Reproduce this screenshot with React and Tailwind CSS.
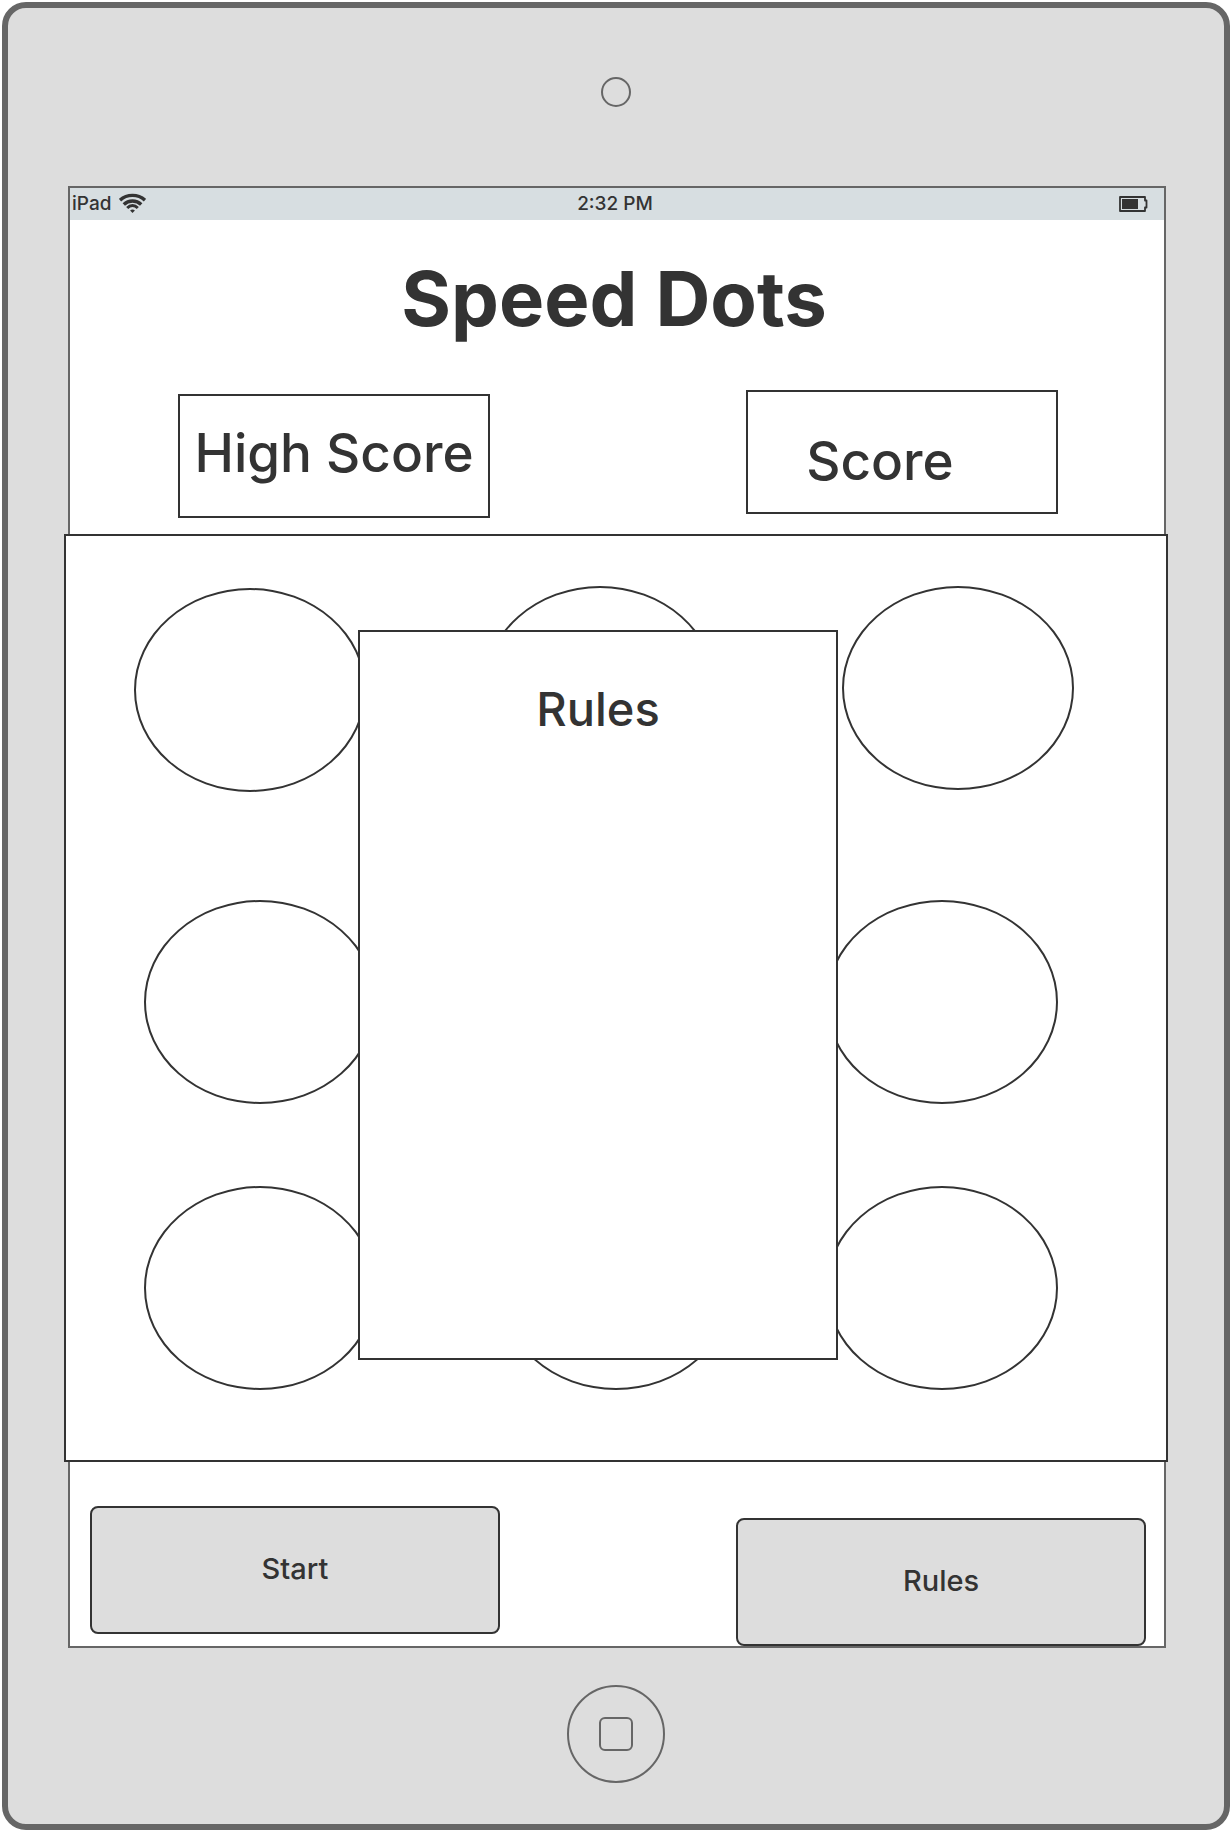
function WifiIcon() {
  return (
    <svg width="27" height="20" viewBox="0 0 27 20" fill="none" stroke="#333333" strokeWidth="3.4" aria-hidden="true">
      <path d="M1 7.2 C8 0.8 19 0.8 26 7.2" />
      <path d="M4.8 11.4 C9.6 6.8 17.4 6.8 22.2 11.4" strokeWidth="3.4" />
      <path d="M8.2 15 C11.4 11.8 15.6 11.8 18.8 15" strokeWidth="3" />
      <path d="M11.1 17.6 Q13.5 15.4 15.9 17.6 L13.5 20 Z" fill="#333333" stroke="none" />
    </svg>
  );
}

function BatteryIcon() {
  return (
    <svg width="29" height="16" viewBox="0 0 29 16" aria-hidden="true">
      <path d="M1 1 H26 V4.5 H27.5 V11.5 H26 V15 H1 Z" fill="none" stroke="#333333" strokeWidth="1.8" strokeLinejoin="round" />
      <rect x="3" y="3" width="16" height="10" fill="#333333" />
    </svg>
  );
}

function Dot({ label, className = "" }) {
  return (
    <button
      type="button"
      aria-label={label}
      className={`h-[204px] w-[232px] shrink-0 rounded-[50%] border-2 border-[#333333] bg-white ${className}`}
    />
  );
}

function StatusBar() {
  return (
    <div className="grid h-8 grid-cols-3 items-center bg-[#d7dee1] pr-4 pb-0.5 pl-0.5 text-[19px] leading-none font-medium">
      <div className="flex items-center gap-2">
        <span>iPad</span>
        <WifiIcon />
      </div>
      <time className="pl-2.5 text-center">2:32 PM</time>
      <div className="flex justify-end pt-0.5">
        <BatteryIcon />
      </div>
    </div>
  );
}

function Board() {
  return (
    <main className="relative mt-4 -mr-1 -ml-1.5 border-2 border-[#333333] bg-white pt-[50px] pb-[70px]">
      <div className="flex items-start justify-between pr-[92px] pl-[68px]">
        <Dot label="Dot 1" className="mt-0.5" />
        <Dot label="Dot 2" className="mr-2" />
        <Dot label="Dot 3" />
      </div>
      <div className="mt-[108px] flex justify-between pr-[108px] pl-[78px]">
        <Dot label="Dot 4" />
        <Dot label="Dot 5" className="ml-[30px]" />
        <Dot label="Dot 6" />
      </div>
      <div className="mt-[82px] flex justify-between pr-[108px] pl-[78px]">
        <Dot label="Dot 7" />
        <Dot label="Dot 8" className="ml-[30px]" />
        <Dot label="Dot 9" />
      </div>
      <section
        role="dialog"
        aria-labelledby="rules-title"
        className="absolute top-[94px] right-[328px] bottom-[100px] left-[292px] border-2 border-[#333333] bg-white pt-12"
      >
        <h2 id="rules-title" className="text-center text-[47px] leading-[58px] font-medium">Rules</h2>
      </section>
    </main>
  );
}

export default function App() {
  return (
    <div className="bg-white p-0.5 font-['Inter',sans-serif] text-[#333333]">
      <div className="rounded-3xl border-6 border-[#666666] bg-[#dddddd] pt-[69px] pb-[41px]">
        <div className="mx-auto size-[30px] rounded-full border-2 border-[#666666]" />
        <div className="mt-[79px] mr-[58px] ml-[60px] border-2 border-[#666666] bg-white">
          <StatusBar />
          <h1 className="pt-8 pr-1.5 text-center text-[76px] leading-[92px] font-bold">Speed Dots</h1>
          <div className="mt-[46px] flex items-start justify-between pr-[106px] pl-[108px]">
            <div className="mt-1 flex h-[124px] w-[312px] items-center justify-center border-2 border-[#333333] pb-1 text-[53px] font-medium whitespace-nowrap">
              High Score
            </div>
            <div className="flex h-[124px] w-[312px] items-center justify-center border-2 border-[#333333] pt-5 pr-11 text-[53px] font-medium">
              Score
            </div>
          </div>
          <Board />
          <div className="flex items-start justify-between pt-11 pr-[18px] pl-5 text-[29px] font-medium">
            <button type="button" className="h-32 w-[410px] rounded-lg border-2 border-[#333333] bg-[#dddddd] pb-0.5">
              Start
            </button>
            <button type="button" className="mt-3 h-32 w-[410px] rounded-lg border-2 border-[#333333] bg-[#dddddd] pb-0.5">
              Rules
            </button>
          </div>
        </div>
        <button
          type="button"
          aria-label="Home"
          className="mx-auto mt-[37px] flex size-[98px] items-center justify-center rounded-full border-2 border-[#666666]"
        >
          <span className="size-[34px] rounded-md border-2 border-[#666666]" />
        </button>
      </div>
    </div>
  );
}
